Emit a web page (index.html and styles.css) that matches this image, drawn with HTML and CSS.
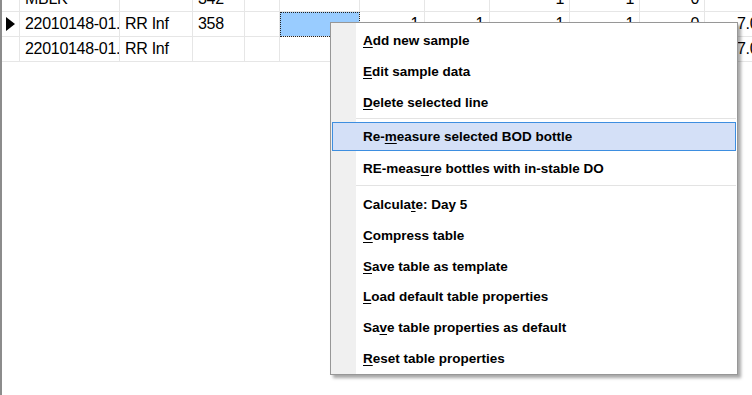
FILE: index.html
```html
<!DOCTYPE html>
<html lang="en">
<head>
    <meta charset="UTF-8">
    <title>BOD Samples</title>
    <link rel="stylesheet" href="styles.css">
</head>
<body>
    <div class="grid-view">
        <div class="rows">
            <!-- row scrolled half out of view -->
            <div class="row">
                <div class="cell head"></div>
                <div class="cell">MBLK</div>
                <div class="cell"></div>
                <div class="cell">342</div>
                <div class="cell"></div>
                <div class="cell"></div>
                <div class="cell num"></div>
                <div class="cell num"></div>
                <div class="cell num">1</div>
                <div class="cell num">1</div>
                <div class="cell num">0</div>
                <div class="cell last"></div>
            </div>

            <div class="row">
                <div class="cell head"><span class="current"></span></div>
                <div class="cell">22010148-01.</div>
                <div class="cell">RR Inf</div>
                <div class="cell">358</div>
                <div class="cell"></div>
                <div class="cell selected"></div>
                <div class="cell num">1</div>
                <div class="cell num">1</div>
                <div class="cell num">1</div>
                <div class="cell num">1</div>
                <div class="cell num">0</div>
                <div class="cell last">7.00</div>
            </div>

            <div class="row">
                <div class="cell head"></div>
                <div class="cell">22010148-01.</div>
                <div class="cell">RR Inf</div>
                <div class="cell"></div>
                <div class="cell"></div>
                <div class="cell"></div>
                <div class="cell num"></div>
                <div class="cell num"></div>
                <div class="cell num"></div>
                <div class="cell num"></div>
                <div class="cell num"></div>
                <div class="cell last">7.00</div>
            </div>
        </div>

        <!-- Context menu -->
        <div class="context-menu">
            <div class="menu-item"><u>A</u>dd new sample</div>
            <div class="menu-item"><u>E</u>dit sample data</div>
            <div class="menu-item"><u>D</u>elete selected line</div>
            <div class="menu-sep"></div>
            <div class="menu-item active">Re-<u>m</u>easure selected BOD bottle</div>
            <div class="menu-item">RE-meas<u>u</u>re bottles with in-stable DO</div>
            <div class="menu-sep"></div>
            <div class="menu-item">Calcula<u>t</u>e: Day 5</div>
            <div class="menu-item"><u>C</u>ompress table</div>
            <div class="menu-item"><u>S</u>ave table as template</div>
            <div class="menu-item"><u>L</u>oad default table properties</div>
            <div class="menu-item">Sa<u>v</u>e table properties as default</div>
            <div class="menu-item"><u>R</u>eset table properties</div>
        </div>
    </div>
</body>
</html>
```

FILE: styles.css
```css
body {
    margin: 0;
    background-color: #fff;
    overflow: hidden;
}

.grid-view {
    position: relative;
    height: 100vh;
    border-left: 2px solid #8c8c8c;
    box-sizing: border-box;
    overflow: hidden;
    font-family: 'Liberation Sans', Arial, sans-serif;
    color: #000;
}

.rows {
    margin-top: -13px;
}

.row {
    display: grid;
    grid-template-columns: 18px 100px 73px 52px 35px 80px 65px 65px 80px 70px 65px 1fr;
    height: 25px;
}

.cell {
    box-sizing: border-box;
    border-right: 1px solid #e6e6e6;
    border-bottom: 1px solid #e6e6e6;
    padding: 0 5px;
    font-size: 16px;
    letter-spacing: -0.3px;
    line-height: 24px;
    white-space: nowrap;
    overflow: hidden;
}

.cell.num {
    text-align: right;
}

.cell.last {
    padding-left: 32px;
    border-right: none;
}

.cell.head {
    display: flex;
    align-items: center;
    padding: 0 0 0 4px;
}

.current {
    width: 0;
    height: 0;
    border-left: 9px solid #000;
    border-top: 7px solid transparent;
    border-bottom: 7px solid transparent;
}

.cell.selected {
    background-color: #99ccff;
    outline: 1px dotted #222;
    outline-offset: -1px;
}

.context-menu {
    position: absolute;
    left: 328px;
    top: 22px;
    width: 406px;
    padding-top: 2px;
    background: linear-gradient(to right, #f0f0f0 25px, #fff 25px);
    border: 1px solid #979797;
    box-shadow: 3px 3px 3px rgba(0, 0, 0, 0.35);
    font-family: 'Liberation Sans', Arial, sans-serif;
    font-weight: bold;
    font-size: 13.5px;
}

.menu-item {
    height: 30.75px;
    line-height: 31px;
    padding-left: 32px;
    white-space: nowrap;
}

.menu-item u {
    text-decoration-thickness: 1px;
    text-underline-offset: 2px;
}

.menu-item.active {
    box-sizing: border-box;
    height: 29px;
    line-height: 27px;
    margin: 0 1px 2px;
    padding-left: 30px;
    background-color: #d4e0f7;
    border: 1px solid #3d8ee0;
}

.menu-sep {
    height: 4px;
    margin: 0 1px 0 25px;
}

.menu-sep::before {
    content: '';
    display: block;
    margin-top: 1px;
    height: 1px;
    background-color: #e3e3e3;
}
```
